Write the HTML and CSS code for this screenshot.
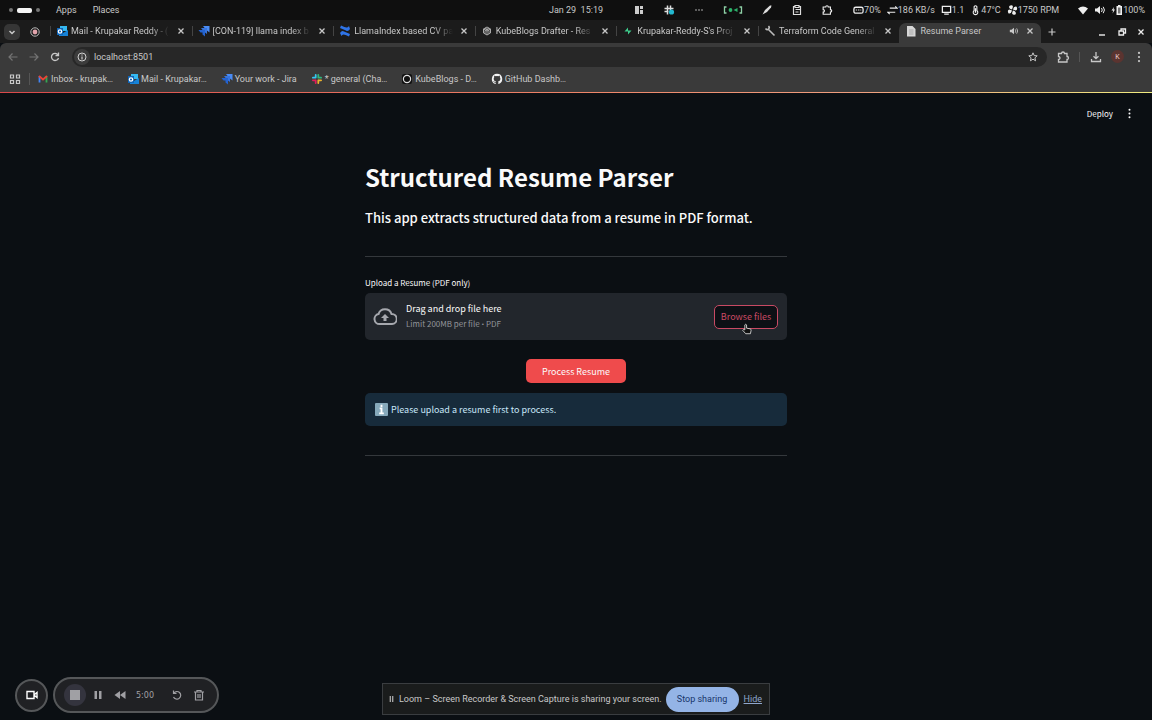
FILE: index.html
```html
<!DOCTYPE html>
<html lang="en">
<head>
    <meta charset="UTF-8">
    <meta name="viewport" content="width=device-width, initial-scale=1.0">
    <title>Resume Parser</title>
    <link rel="stylesheet" href="styles.css">
</head>
<body>
    <svg class="sprite" aria-hidden="true">
        <symbol id="i-close" viewBox="0 0 10 10"><path d="M2.5 2.5l5 5M7.5 2.5l-5 5" stroke="currentColor" stroke-width="1.3"/></symbol>
        <symbol id="i-jira" viewBox="0 0 12 12"><path fill="#4a8cf5" d="M5 1h6.500v6.500L9 5.500V3.500H7z"/><path fill="#3674df" d="M3 3h6v6L7 7.500V5.500H5z"/><path fill="#2362cf" d="M.5 5h6.500v6.500L4.500 9.500V7.500H2.500z"/></symbol>
        <symbol id="i-outlook" viewBox="0 0 12 12"><path fill="#35b8f1" d="M4 1h7v5H4z"/><path fill="#1683d8" d="M3 5l4 3 5-3v6H3z"/><path fill="#0f65b8" d="M1 3h6v7H1z"/><circle cx="4" cy="6.500" r="1.700" fill="none" stroke="#fff" stroke-width="1.200"/></symbol>
        <symbol id="i-puzzle" viewBox="0 0 14 14"><path d="M2.500 3.500H5.500a1.500 1.500 0 013 0h2.500v3a1.500 1.500 0 010 3v2.500H2.500V9.500a1.500 1.500 0 000-3z" fill="none" stroke="currentColor" stroke-width="1.300"/></symbol>
        <symbol id="i-sound" viewBox="0 0 12 12"><path d="M1 4.500h2l3-2.500v8L3 7.500H1z" fill="currentColor"/><path d="M7.500 4q1.500 2 0 4M9.200 2.800q2.500 3.200 0 6.400" fill="none" stroke="currentColor"/></symbol>
        <symbol id="i-dots" viewBox="0 0 12 12"><circle cx="6" cy="1.900" r="1.100"/><circle cx="6" cy="6" r="1.100"/><circle cx="6" cy="10.100" r="1.100"/></symbol>
    </svg>

    <header class="topbar">
        <div class="topbar-left">
            <span class="workspaces"><i></i><i class="current"></i><i></i></span>
            <a href="#">Apps</a>
            <a href="#">Places</a>
        </div>
        <time class="clock">Jan 29&nbsp; 15:19</time>
        <div class="topbar-right">
            <div class="tray">
                <svg viewBox="0 0 12 12" fill="#ccc"><path d="M2 2h4v8H2zM7 2h3v3H7zM7 6h3v4H7z"/></svg>
                <svg viewBox="0 0 12 12"><path d="M4.500 1.500v9M7.500 1.500v5M1.500 4.500h9M1.500 7.500h4" stroke="#ddd" stroke-width="1.500"/><circle cx="8.500" cy="8" r="2.600" fill="#22b8cf"/></svg>
                <svg viewBox="0 0 12 12" fill="#aaa"><path d="M2 5.500h2v1H2zM5 5.500h2v1H5zM8 5.500h2v1H8z"/></svg>
                <svg class="wide" viewBox="0 0 20 12"><path d="M3.500 3H1.500v6h2M16.500 3h2v6h-2" fill="none" stroke="#8ed0a6" stroke-width="1.300"/><circle cx="7.500" cy="6" r="1.900" fill="#2db36b"/><path d="M10.500 6l4-2v4z" fill="#2db36b"/></svg>
                <svg viewBox="0 0 12 12"><path d="M1.500 10.500L4 6l5-4.500 1.500 0L10 3.500 6 8z" fill="#ddd"/></svg>
                <svg viewBox="0 0 12 12" fill="none" stroke="#ddd" stroke-width="1.200"><path d="M4 2.500H2.500v8h7v-8H8"/><path d="M4 1.500h4v2H4zM4.500 5.500h5M4.500 8h3"/></svg>
                <svg viewBox="0 0 14 14"><use href="#i-puzzle"/></svg>
            </div>
            <div class="stats">
                <span><svg viewBox="0 0 12 12"><rect x="1" y="3" width="10" height="6.500" rx="2" fill="none" stroke="currentColor" stroke-width="1.400"/><path d="M3 6h1.500M5.500 6H7M8 6h1" stroke="currentColor"/></svg>70%</span>
                <span><svg viewBox="0 0 12 12" fill="none" stroke="currentColor" stroke-width="1.200"><path d="M3 4h8L9 2M9 8.500H1l2 2"/></svg>186 KB/s</span>
                <span><svg viewBox="0 0 12 12"><path d="M1.500 2h9v6.500h-9zM3.500 10.500h5" fill="none" stroke="currentColor" stroke-width="1.400"/></svg>1.1</span>
                <span><svg viewBox="0 0 12 12"><path d="M4.500 6.500V2.300q1.500-2 3 0v4.200a2.500 2.500 0 11-3 0z" fill="none" stroke="currentColor" stroke-width="1.200"/><path d="M6 4v5" stroke="currentColor" stroke-width="1.500"/></svg>47°C</span>
                <span><svg viewBox="0 0 12 12" fill="currentColor"><path d="M5.500 5.500Q1.500 4.500 2.500 1.500q3.500-1.500 4 1zM6.500 5.500Q7.500 1.500 10.500 2.500q1.500 3.500-1 4zM6.500 6.500Q10.500 7.500 9.500 10.500q-3.500 1.500-4-1zM5.500 6.500Q4.500 10.500 1.500 9.500q-1.500-3.500 1-4z"/></svg>1750 RPM</span>
            </div>
            <div class="system">
                <svg viewBox="0 0 12 12"><path d="M1 4.500q5-4 10 0L6 10.500z" fill="currentColor"/></svg>
                <svg viewBox="0 0 12 12"><use href="#i-sound"/></svg>
                <span><svg viewBox="0 0 12 12" fill="currentColor"><path d="M3 3L.5 6.500h1.700L1.500 9.500 4 5.500H2.500zM5.500 2H7V1h2.500v1H11v9H5.500z"/><path d="M7 3.500h2.500v6H7z" fill="#777"/></svg>100%</span>
            </div>
        </div>
    </header>

    <nav class="tabstrip">
        <button class="tab-search" aria-label="Search tabs"><svg viewBox="0 0 12 12"><path d="M3.500 5L6 7.500 8.500 5" fill="none" stroke="currentColor" stroke-width="1.500"/></svg></button>
        <button class="pinned" aria-label="Recording"><svg viewBox="0 0 12 12"><circle cx="6" cy="6" r="4.200" fill="none" stroke="#bbb"/><circle cx="6" cy="6" r="2.400" fill="#e2a4ac"/></svg></button>
        <div class="tabs">
            <div class="tab">
                <svg viewBox="0 0 12 12"><use href="#i-outlook"/></svg>
                <a href="#">Mail - Krupakar Reddy - (</a>
                <button class="close" aria-label="Close tab"><svg viewBox="0 0 10 10"><use href="#i-close"/></svg></button>
            </div>
            <div class="tab">
                <svg viewBox="0 0 12 12"><use href="#i-jira"/></svg>
                <a href="#">[CON-119] llama index b</a>
                <button class="close" aria-label="Close tab"><svg viewBox="0 0 10 10"><use href="#i-close"/></svg></button>
            </div>
            <div class="tab">
                <svg viewBox="0 0 12 12"><path fill="#2f74e8" d="M1 8q2-3 4-1.500l6 2.500-1 2.500q-4-2-5.500-2Q3 9.500 2.500 11zM11 4Q9 7 7 5.500L1 3 2 .500q4 2 5.500 2T10 1z"/></svg>
                <a href="#">LlamaIndex based CV pa</a>
                <button class="close" aria-label="Close tab"><svg viewBox="0 0 10 10"><use href="#i-close"/></svg></button>
            </div>
            <div class="tab">
                <svg viewBox="0 0 12 12" fill="none" stroke="#aaa"><path d="M6 2l3.500 2v4L6 10 2.500 8V4zM2.500 4L6 6l3.500-2M6 6v4M4 3l4 2.500V9M8 3L4 5.500V9"/></svg>
                <a href="#">KubeBlogs Drafter - Res</a>
                <button class="close" aria-label="Close tab"><svg viewBox="0 0 10 10"><use href="#i-close"/></svg></button>
            </div>
            <div class="tab">
                <svg viewBox="0 0 12 12"><path d="M6 2.500v3h3.500L6 9.500v-3H2.500z" fill="#3ecf8e"/></svg>
                <a href="#">Krupakar-Reddy-S's Proj</a>
                <button class="close" aria-label="Close tab"><svg viewBox="0 0 10 10"><use href="#i-close"/></svg></button>
            </div>
            <div class="tab">
                <svg viewBox="0 0 12 12"><path d="M1.500 3.500q1.500 2 3 .5t0-3M4.500 4.500l6 6" fill="none" stroke="#bbb" stroke-width="1.600"/></svg>
                <a href="#">Terraform Code General</a>
                <button class="close" aria-label="Close tab"><svg viewBox="0 0 10 10"><use href="#i-close"/></svg></button>
            </div>
            <div class="tab active">
                <svg viewBox="0 0 12 12"><path d="M2 1h5.500L10.500 4v7.500H2z" fill="#d6d6d6"/><path d="M4 5h4.500M4 7h4.500M4 9h4.500" stroke="#999" stroke-width=".7"/></svg>
                <a href="#">Resume Parser</a>
                <svg class="audio" viewBox="0 0 12 12"><use href="#i-sound"/></svg>
                <button class="close" aria-label="Close tab"><svg viewBox="0 0 10 10"><use href="#i-close"/></svg></button>
            </div>
        </div>
        <button class="new-tab" aria-label="New tab"><svg viewBox="0 0 12 12"><path d="M6 2.500v7M2.500 6h7" stroke="currentColor" stroke-width="1.200"/></svg></button>
        <div class="window-buttons">
            <button aria-label="Minimize"><svg viewBox="0 0 12 12"><path d="M3 9h6" stroke="currentColor" stroke-width="1.400"/></svg></button>
            <button aria-label="Restore"><svg viewBox="0 0 12 12"><path d="M3 5h4.500v4H3zM5 4.500V3h4.500v4H8" fill="none" stroke="currentColor" stroke-width="1.300"/></svg></button>
            <button class="close" aria-label="Close window"><svg viewBox="0 0 10 10"><use href="#i-close"/></svg></button>
        </div>
    </nav>

    <div class="toolbar">
        <button class="dim" aria-label="Back"><svg viewBox="0 0 12 12"><path d="M10.500 6H2M5.500 2.500L2 6l3.500 3.500" fill="none" stroke="currentColor" stroke-width="1.200"/></svg></button>
        <button class="dim" aria-label="Forward"><svg viewBox="0 0 12 12"><path d="M1.500 6H10M6.500 2.500L10 6 6.500 9.500" fill="none" stroke="currentColor" stroke-width="1.200"/></svg></button>
        <button aria-label="Reload"><svg viewBox="0 0 12 12"><path d="M9.500 7A3.600 3.600 0 119 3.800M9.500 1.500V4.500h-3" fill="none" stroke="currentColor" stroke-width="1.300"/></svg></button>
        <div class="omnibox">
            <svg class="site-info" viewBox="0 0 16 16"><circle cx="8" cy="8" r="8" fill="#3c3c3c"/><circle cx="8" cy="8" r="4" fill="none" stroke="#d0d0d0"/><path d="M8 7.500v3M8 5.500v1" stroke="#d0d0d0" stroke-width="1.200"/></svg>
            <input type="text" value="localhost:8501" aria-label="Address">
            <button aria-label="Bookmark"><svg viewBox="0 0 12 12"><path d="M6 1.800l1.200 2.800 3 .2L7.900 6.800l.7 3L6 8.200 3.400 9.800l.7-3L1.800 4.800l3-.2z" fill="none" stroke="currentColor"/></svg></button>
        </div>
        <button class="extensions" aria-label="Extensions"><svg viewBox="0 0 14 14"><use href="#i-puzzle"/></svg></button>
        <span class="divider"></span>
        <button class="downloads" aria-label="Downloads"><svg viewBox="0 0 12 12"><path d="M6 1v6.500M3.500 5.200L6 7.700l2.500-2.500M1.500 8v2.500h9V8" fill="none" stroke="currentColor" stroke-width="1.300"/></svg></button>
        <button class="profile">K</button>
        <button class="menu" aria-label="Menu"><svg viewBox="0 0 12 12" fill="currentColor"><use href="#i-dots"/></svg></button>
    </div>

    <nav class="bookmarks">
        <button class="all-apps" aria-label="Apps"><svg viewBox="0 0 12 12"><path d="M1.500 2h3v3h-3zM7.500 2h3v3h-3zM1.500 7.500h3v3h-3zM7.500 7.500h3v3h-3z" fill="none" stroke="currentColor" stroke-width="1.200"/></svg></button>
        <a href="#"><svg viewBox="0 0 12 12" fill="none" stroke-width="1.800"><path d="M2.500 9.500V3" stroke="#4285f4"/><path d="M9.500 9.500V3" stroke="#34a853"/><path d="M2 3l4 3.500L10 3" stroke="#ea4335"/></svg><span>Inbox - krupak…</span></a>
        <a href="#"><svg viewBox="0 0 12 12"><use href="#i-outlook"/></svg><span>Mail - Krupakar…</span></a>
        <a href="#"><svg viewBox="0 0 12 12"><use href="#i-jira"/></svg><span>Your work - Jira</span></a>
        <a href="#"><svg viewBox="0 0 12 12" fill="none" stroke-width="1.800" stroke-linecap="round"><path d="M4.700 1.900v2.600M1.900 4.700h2.600" stroke="#36c5f0"/><path d="M7.300 1.900v2.800M7.500 4.700h2.600" stroke="#2eb67d"/><path d="M7.500 7.300h2.600M7.300 7.500v2.600" stroke="#ecb22e"/><path d="M1.900 7.300h2.600M4.700 7.500v2.600" stroke="#e01e5a"/></svg><span>* general (Cha…</span></a>
        <a href="#"><svg viewBox="0 0 12 12"><rect x="1" y="1" width="10" height="10" rx="2" fill="#111"/><circle cx="6" cy="6" r="3.600" fill="none" stroke="#e0e0e0" stroke-width="1.200"/></svg><span>KubeBlogs - D…</span></a>
        <a href="#"><svg viewBox="0 0 16 16" fill="#f2f2f2"><path d="M8 1a7 7 0 00-2.200 13.600c.4.100.5-.1.500-.3v-1.400c-2 .4-2.400-.8-2.400-.8-.3-.8-.8-1-.8-1-.6-.5.100-.4.100-.4.700 0 1.100.7 1.100.7.600 1.100 1.700.8 2 .6.100-.5.300-.8.500-1-1.600-.2-3.200-.8-3.200-3.500 0-.8.300-1.400.7-1.900-.1-.2-.3-.9.100-1.900 0 0 .6-.2 1.900.7a6.600 6.600 0 013.500 0c1.300-.9 1.900-.7 1.900-.7.400 1 .2 1.700.1 1.900.5.500.7 1.100.7 1.900 0 2.700-1.600 3.300-3.200 3.500.300.2.5.700.5 1.300v2c0 .2.100.4.500.300A7 7 0 008 1z"/></svg><span>GitHub Dashb…</span></a>
    </nav>

    <div class="app">
        <header class="app-header">
            <button>Deploy</button>
            <button aria-label="Main menu"><svg viewBox="0 0 12 12" fill="currentColor"><use href="#i-dots"/></svg></button>
        </header>
        <main>
            <h1>Structured Resume Parser</h1>
            <h2>This app extracts structured data from a resume in PDF format.</h2>
            <hr>
            <label for="resume-file">Upload a Resume (PDF only)</label>
            <div class="dropzone">
                <input type="file" id="resume-file" accept=".pdf" hidden>
                <svg viewBox="0 0 24 24"><path d="M6.500 19a5 5 0 01-1-9.900A6.800 6.800 0 0118.500 9a5 5 0 01.5 10z" fill="none" stroke="currentColor" stroke-width="2"/><path d="M12 9l4 4h-2.500v3h-3v-3H8z" fill="currentColor"/></svg>
                <div class="hint">
                    <span>Drag and drop file here</span>
                    <small>Limit 200MB per file <span class="bullet">•</span> PDF</small>
                </div>
                <button id="browse">Browse files
                    <svg class="pointer" viewBox="0 0 12 14"><path d="M3.500 8V2.200q1-1.400 2 0V6l4.200.8q1.300.3 1.100 1.700L10 12.500H4.500L1 8.500q.6-1.500 2.500-.5z" fill="#111" stroke="#ddd"/></svg>
                </button>
            </div>
            <button class="process">Process Resume</button>
            <div class="alert">
                <svg viewBox="0 0 14 14"><rect width="14" height="14" rx="1" fill="#86a9bb"/><path d="M7 2v2.200M5 5.800h2v5.400M4.500 11.200h5" fill="none" stroke="#fff" stroke-width="2"/></svg>
                <span>Please upload a resume first to process.</span>
            </div>
            <hr>
        </main>
    </div>

    <div class="recorder">
        <button class="camera" aria-label="Camera"><svg viewBox="0 0 14 14"><path d="M2 3.500h7v7H2zM9.500 6.500l2.500-2v5l-2.500-2z" fill="none" stroke="currentColor" stroke-width="1.400"/></svg></button>
        <div class="controls">
            <button class="stop" aria-label="Stop"><svg viewBox="0 0 12 12" fill="currentColor"><path d="M1 1h10v10H1z"/></svg></button>
            <button aria-label="Pause"><svg viewBox="0 0 12 12" fill="currentColor"><path d="M2.500 2H5v8H2.500zM7 2h2.500v8H7z"/></svg></button>
            <button aria-label="Rewind"><svg viewBox="0 0 12 12" fill="currentColor"><path d="M6 2v8L.5 6zM11.500 2v8L6 6z"/></svg></button>
            <span class="elapsed">5:00</span>
            <button aria-label="Restart"><svg viewBox="0 0 12 12"><path d="M2.500 1.500v3h3M2.700 4.300A3.800 3.800 0 112.500 8" fill="none" stroke="currentColor" stroke-width="1.200"/></svg></button>
            <button aria-label="Delete"><svg viewBox="0 0 12 12"><path d="M1 3h10M4 2.500v-1h4v1M2.500 3v8h7V3M5 5v4M7 5v4" fill="none" stroke="currentColor" stroke-width="1.200"/></svg></button>
        </div>
    </div>

    <div class="sharing">
        <svg viewBox="0 0 6 10"><path d="M1.500 1.500v7M4.500 1.500v7" stroke="currentColor" stroke-width="1.300"/></svg>
        <span>Loom – Screen Recorder &amp; Screen Capture is sharing your screen.</span>
        <button>Stop sharing</button>
        <a href="#">Hide</a>
    </div>

    <script>
        document.getElementById('browse').addEventListener('click', () => {
            document.getElementById('resume-file').click();
        });
    </script>
</body>
</html>
```

FILE: styles.css
```css
* {
    box-sizing: border-box;
}

body {
    margin: 0;
    min-height: 100vh;
    display: flex;
    flex-direction: column;
    background: #0b0f13;
    color: #c8c8c8;
    font-family: Roboto, sans-serif;
    font-size: 9px;
}

button {
    display: flex;
    align-items: center;
    justify-content: center;
    padding: 0;
    border: none;
    background: none;
    color: inherit;
    font: inherit;
    white-space: nowrap;
    cursor: pointer;
}

a {
    color: inherit;
    text-decoration: none;
}

svg {
    width: 12px;
    height: 12px;
    flex: none;
    display: block;
}

.sprite {
    display: none;
}

/* desktop panel */
.topbar {
    display: grid;
    grid-template-columns: 1fr auto 1fr;
    align-items: center;
    height: 20px;
    background: #0f0f0f;
}

.topbar-left {
    display: flex;
    align-items: center;
    gap: 16px;
    padding-left: 9px;
}

.workspaces {
    display: flex;
    align-items: center;
    gap: 4px;
}

.workspaces i {
    width: 4px;
    height: 4px;
    border-radius: 2px;
    background: #777;
}

.workspaces .current {
    width: 15px;
    height: 5px;
    background: #f4f4f4;
}

.topbar-right,
.stats,
.system,
.topbar-right span {
    display: flex;
    align-items: center;
}

.topbar-right {
    justify-content: flex-end;
    padding-right: 7px;
}

.tray {
    display: flex;
    align-items: center;
    gap: 18px;
    margin-right: 20px;
}

.tray .wide {
    width: 20px;
}

.stats {
    gap: 6px;
    margin-right: 18px;
}

.stats svg {
    width: 11px;
}

.system {
    gap: 5px;
}

.topbar-right svg {
    color: #eee;
}

/* browser tabs */
.tabstrip {
    display: flex;
    align-items: center;
    height: 23px;
    background: #1b1b1b;
}

.tab-search {
    width: 16px;
    height: 16px;
    margin-left: 4px;
    border-radius: 5px;
    background: #363636;
}

.pinned {
    width: 30px;
}

.tabs {
    flex: 1;
    min-width: 0;
    display: flex;
    align-self: flex-end;
}

.tab {
    flex: 1;
    min-width: 0;
    display: flex;
    align-items: center;
    gap: 3px;
    height: 20px;
    padding: 0 6px 4px;
    position: relative;
}

.tab::before {
    content: "";
    position: absolute;
    left: 0;
    top: 3px;
    width: 1px;
    height: 10px;
    background: #444;
}

.tab a {
    flex: 1;
    white-space: nowrap;
    mask-image: linear-gradient(to right, #000 80%, transparent);
}

.close svg {
    width: 10px;
    height: 10px;
}

.tab .close {
    margin-left: 3px;
}

.tab.active {
    background: #3a3a3a;
    border-radius: 7px 7px 0 0;
}

.tab.active::before {
    display: none;
}

.tab.active a {
    mask-image: none;
}

.audio {
    width: 10px;
}

.new-tab {
    width: 22px;
}

.window-buttons {
    display: flex;
    gap: 8px;
    margin: 0 6px 0 33px;
    color: #eee;
}

/* address bar */
.toolbar {
    display: flex;
    align-items: center;
    height: 27px;
    padding: 0 7px;
    background: #3a3a3a;
    border-radius: 6px 6px 0 0;
}

.toolbar .dim {
    color: #747474;
    margin-right: 9px;
}

.omnibox {
    flex: 1;
    display: flex;
    align-items: center;
    height: 20px;
    margin-left: 11px;
    padding: 0 8px 0 2px;
    border-radius: 10px;
    background: #272727;
}

.site-info {
    width: 16px;
    height: 16px;
}

.omnibox input {
    flex: 1;
    min-width: 0;
    margin-left: 4px;
    padding: 0;
    border: none;
    outline: none;
    background: none;
    color: #c8c8c8;
    font: inherit;
}

.extensions svg {
    width: 14px;
    height: 14px;
}

.extensions {
    margin: 0 9px;
}

.divider {
    width: 1px;
    height: 10px;
    background: #555;
}

.downloads {
    margin: 0 9px 0 10px;
}

.profile {
    width: 13px;
    height: 13px;
    border-radius: 50%;
    background: #5b3430;
    color: #f0d0cc;
    font-size: 7px;
}

.menu {
    margin-left: 9px;
}

.bookmarks {
    display: flex;
    align-items: center;
    height: 22px;
    padding: 0 9px 4px;
    background: #3a3a3a;
}

.bookmarks a {
    display: flex;
    align-items: center;
    gap: 2px;
    margin-right: 14px;
}

.all-apps {
    margin-right: 7px;
    padding-right: 8px;
    border-right: 1px solid #555;
}

/* streamlit page, with its coloured strip along the top */
.app {
    flex: 1;
    background: linear-gradient(to right, #d9484a, #ee8468 50%, #f0a080 75%, #f0ec80) top / 100% 1px no-repeat;
    font-family: "Noto Sans CJK SC", sans-serif;
    color: #fafafa;
}

.app-header {
    display: flex;
    align-items: center;
    justify-content: flex-end;
    gap: 11px;
    height: 42px;
    padding: 0 17px;
    font-size: 8px;
}

.app-header svg {
    width: 11px;
    height: 11px;
}

main {
    width: 422px;
    max-width: 100%;
    margin: 0 auto;
    padding-top: 25px;
}

h1 {
    margin: 0;
    font-size: 24px;
    line-height: 36px;
    font-weight: 700;
}

h2 {
    margin: 13px 0 28px;
    font-size: 13px;
    line-height: 20px;
    font-weight: 500;
}

hr {
    height: 1px;
    margin: 0;
    border: none;
    background: #34383c;
}

label {
    display: block;
    margin-top: 20px;
    font-size: 8px;
    line-height: 12px;
}

.dropzone {
    display: flex;
    align-items: center;
    height: 47px;
    margin-top: 4px;
    padding: 0 9px 0 8px;
    border-radius: 5px;
    background: #22262c;
}

.dropzone > svg {
    width: 24px;
    height: 24px;
    color: #a6a8ae;
}

.hint {
    flex: 1;
    display: flex;
    flex-direction: column;
    margin-left: 9px;
    font-size: 9px;
    line-height: 15px;
}

.hint small {
    color: #92959a;
    font-size: 8px;
}

.bullet {
    font-family: Roboto, sans-serif;
}

#browse {
    position: relative;
    width: 64px;
    height: 24px;
    border: 1px solid #c94a64;
    border-radius: 5px;
    background: #0d1015;
    color: #c94a64;
}

#browse,
.process,
.alert {
    font-size: 9px;
}

.pointer {
    position: absolute;
    left: 26px;
    top: 17px;
}

.process {
    height: 24px;
    margin: 19px auto 10px;
    padding: 0 16px;
    border-radius: 5px;
    background: #ef4b4c;
}

.alert {
    display: flex;
    align-items: center;
    gap: 3px;
    height: 33px;
    margin-bottom: 29px;
    padding: 0 10px;
    border-radius: 5px;
    background: #172b3b;
    color: #c7e6f8;
}

.alert svg {
    width: 13px;
    height: 13px;
}

/* floating recorder controls */
.recorder {
    position: fixed;
    left: 15px;
    bottom: 7px;
    display: flex;
    align-items: center;
    gap: 5px;
    color: #a0a0a4;
}

.camera {
    width: 33px;
    height: 33px;
    border: 2px solid #555759;
    border-radius: 50%;
    background: #202124;
    color: #fff;
}

.camera svg {
    width: 14px;
    height: 14px;
}

.controls {
    display: flex;
    align-items: center;
    gap: 10px;
    height: 36px;
    padding: 0 12px 0 9px;
    border: 2px solid #555759;
    border-radius: 18px;
    background: #202124;
}

.stop {
    width: 22px;
    height: 22px;
    margin-right: -4px;
    border-radius: 50%;
    background: #34343e;
}

.elapsed {
    margin-right: 7px;
    font-family: "DejaVu Sans", sans-serif;
    font-size: 8px;
}

.sharing {
    position: fixed;
    left: 50%;
    bottom: 5px;
    transform: translateX(-50%);
    display: flex;
    align-items: center;
    width: 388px;
    height: 32px;
    padding: 0 6px;
    border: 1px solid #3a3d40;
    background: #1a1c1c;
    white-space: nowrap;
}

.sharing svg {
    width: 5px;
    height: 10px;
    margin-right: 5px;
}

.sharing button {
    width: 73px;
    height: 25px;
    margin: 0 5px 0 4px;
    border-radius: 13px;
    background: #94b4e6;
    color: #16356a;
}

.sharing a {
    color: #8fa6cc;
    text-decoration: underline;
}
```
